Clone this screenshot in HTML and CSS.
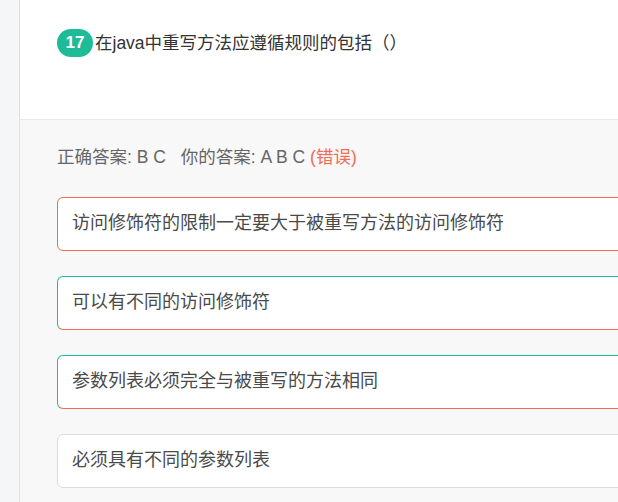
FILE: index.html
```html
<!DOCTYPE html>
<html lang="zh-CN">
<head>
<meta charset="utf-8">
<link rel="stylesheet" href="styles.css">
</head>
<body>
<div class="page">
  <aside class="sidebar"></aside>
  <main class="main">
    <section class="question-head">
      <span class="badge">17</span>
      <span class="question-title">在java中重写方法应遵循规则的包括（）</span>
    </section>
    <section class="question-body">
      <p class="answer-line">正确答案: B C <span class="gap"></span>你的答案: A B C <span class="wrong">(错误)</span></p>
      <ul class="options">
        <li class="option option-wrong">访问修饰符的限制一定要大于被重写方法的访问修饰符</li>
        <li class="option option-right">可以有不同的访问修饰符</li>
        <li class="option option-right">参数列表必须完全与被重写的方法相同</li>
        <li class="option">必须具有不同的参数列表</li>
      </ul>
    </section>
  </main>
</div>
</body>
</html>
```
FILE: styles.css
```css
html, body {
  margin: 0;
  padding: 0;
  overflow: hidden;
  background: #f8f8f8;
}
body {
  font-family: "Liberation Sans", "Noto Sans CJK SC", sans-serif;
}
.page {
  display: flex;
  width: 1000px;
  min-height: 502px;
}
.sidebar {
  width: 19px;
  flex: none;
  background: #f5f6f8;
  border-right: 1px solid #dfe0e3;
}
.main {
  flex: 1;
  background: #f8f8f8;
}
.question-head {
  height: 120px;
  box-sizing: border-box;
  background: #fff;
  border-bottom: 1px solid #e8e8e8;
  padding: 29px 0 0 37px;
  display: flex;
  align-items: flex-start;
}
.badge {
  display: inline-flex;
  align-items: center;
  justify-content: center;
  width: 36px;
  height: 28px;
  border-radius: 14px;
  background: #1dbb98;
  color: #fff;
  font-weight: bold;
  font-size: 17px;
  margin-right: 2px;
}
.question-title {
  font-size: 17.5px;
  line-height: 28px;
  color: #333;
}
.question-body {
  padding: 25px 0 0 37px;
}
.answer-line {
  margin: 0 0 28px;
  font-size: 17.5px;
  line-height: 24px;
  color: #666;
}
.gap {
  display: inline-block;
  width: 10px;
}
.wrong {
  color: #f26b55;
}
.options {
  list-style: none;
  margin: 0;
  padding: 0;
}
.option {
  height: 54px;
  box-sizing: border-box;
  margin-bottom: 25px;
  padding-left: 14px;
  border: 1px solid #dcdcdc;
  border-radius: 6px;
  background: #fff;
  font-size: 18px;
  line-height: 51px;
  color: #4a4a4a;
}
.option-wrong {
  border-color: #f26b55;
}
.option-right {
  border-color: #1dbb98 #1dbb98 #f26b55 #1dbb98;
}
```
